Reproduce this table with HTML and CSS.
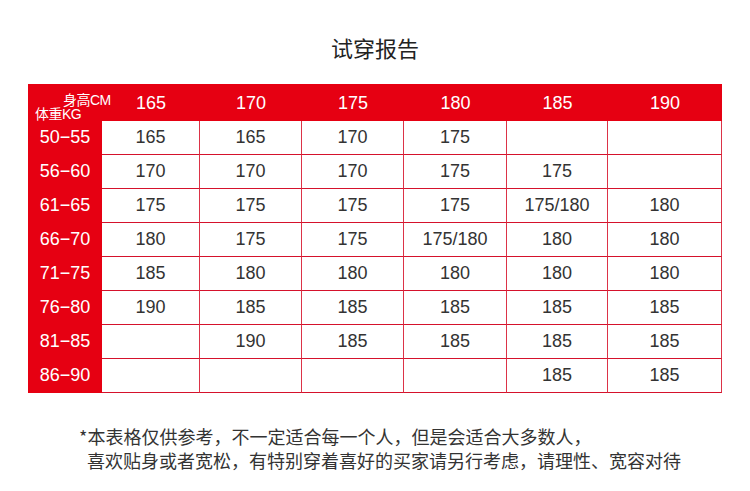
FILE: index.html
```html
<!DOCTYPE html>
<html lang="zh-CN">
<head>
<meta charset="utf-8">
<title>试穿报告</title>
<link rel="stylesheet" href="styles.css">
</head>
<body>
<h1 class="title">试穿报告</h1>
<div class="chart">
  <div class="corner">
    <span class="corner-top">身高CM</span>
    <span class="corner-bottom">体重KG</span>
  </div>
  <div class="head">165</div>
  <div class="head">170</div>
  <div class="head">175</div>
  <div class="head">180</div>
  <div class="head">185</div>
  <div class="head">190</div>

  <div class="label">50−55</div>
  <div class="cell">165</div><div class="cell">165</div><div class="cell">170</div><div class="cell">175</div><div class="cell"></div><div class="cell"></div>

  <div class="label">56−60</div>
  <div class="cell">170</div><div class="cell">170</div><div class="cell">170</div><div class="cell">175</div><div class="cell">175</div><div class="cell"></div>

  <div class="label">61−65</div>
  <div class="cell">175</div><div class="cell">175</div><div class="cell">175</div><div class="cell">175</div><div class="cell">175/180</div><div class="cell">180</div>

  <div class="label">66−70</div>
  <div class="cell">180</div><div class="cell">175</div><div class="cell">175</div><div class="cell">175/180</div><div class="cell">180</div><div class="cell">180</div>

  <div class="label">71−75</div>
  <div class="cell">185</div><div class="cell">180</div><div class="cell">180</div><div class="cell">180</div><div class="cell">180</div><div class="cell">180</div>

  <div class="label">76−80</div>
  <div class="cell">190</div><div class="cell">185</div><div class="cell">185</div><div class="cell">185</div><div class="cell">185</div><div class="cell">185</div>

  <div class="label">81−85</div>
  <div class="cell"></div><div class="cell">190</div><div class="cell">185</div><div class="cell">185</div><div class="cell">185</div><div class="cell">185</div>

  <div class="label">86−90</div>
  <div class="cell"></div><div class="cell"></div><div class="cell"></div><div class="cell"></div><div class="cell">185</div><div class="cell">185</div>
</div>
<div class="note">
  <p class="note-line">*本表格仅供参考，不一定适合每一个人，但是会适合大多数人，</p>
  <p class="note-line indent">喜欢贴身或者宽松，有特别穿着喜好的买家请另行考虑，请理性、宽容对待</p>
</div>
</body>
</html>
```
FILE: styles.css
```css
html, body {
  margin: 0;
  padding: 0;
  background: #ffffff;
}
body {
  width: 750px;
  height: 491px;
  overflow: hidden;
  font-family: "Liberation Sans", "Noto Sans CJK SC", sans-serif;
  color: #333333;
}
.title {
  margin: 32px 0 0 0;
  font-family: "Noto Sans CJK SC", sans-serif;
  font-weight: 400;
  font-size: 22px;
  line-height: 30px;
  text-align: center;
  color: #222222;
}
.chart {
  margin: 22px 0 0 28px;
  width: 694px;
  display: grid;
  grid-template-columns: 74px 98px 102px 102px 103px 101px 114px;
  grid-template-rows: 37px repeat(8, 34px);
}
.corner {
  position: relative;
  z-index: 1;
  background: #e60012;
  color: #ffffff;
  display: flex;
  flex-direction: column;
  padding: 9px 0 0 7px;
  box-sizing: border-box;
  font-size: 14px;
  line-height: 14px;
  white-space: nowrap;
  letter-spacing: -0.5px;
}
.corner-top {
  margin-left: 28px;
}
.head {
  background: #e60012;
  color: #ffffff;
  font-size: 18px;
  display: flex;
  align-items: center;
  justify-content: center;
  padding-top: 2px;
}
.label {
  background: #e60012;
  color: #ffffff;
  font-size: 18px;
  display: flex;
  align-items: center;
  justify-content: center;
  padding-bottom: 2px;
  box-sizing: border-box;
}
.cell {
  box-sizing: border-box;
  border-right: 1px solid #dc3347;
  border-bottom: 1px solid #d5122c;
  font-size: 18px;
  display: flex;
  align-items: center;
  justify-content: center;
  color: #333333;
}
.note {
  margin: 31px 0 0 79px;
  font-family: "Noto Sans CJK SC", sans-serif;
  font-size: 18px;
  line-height: 24px;
  color: #333333;
}
.note-line {
  margin: 0;
  white-space: nowrap;
}
.indent {
  padding-left: 8px;
}
```
